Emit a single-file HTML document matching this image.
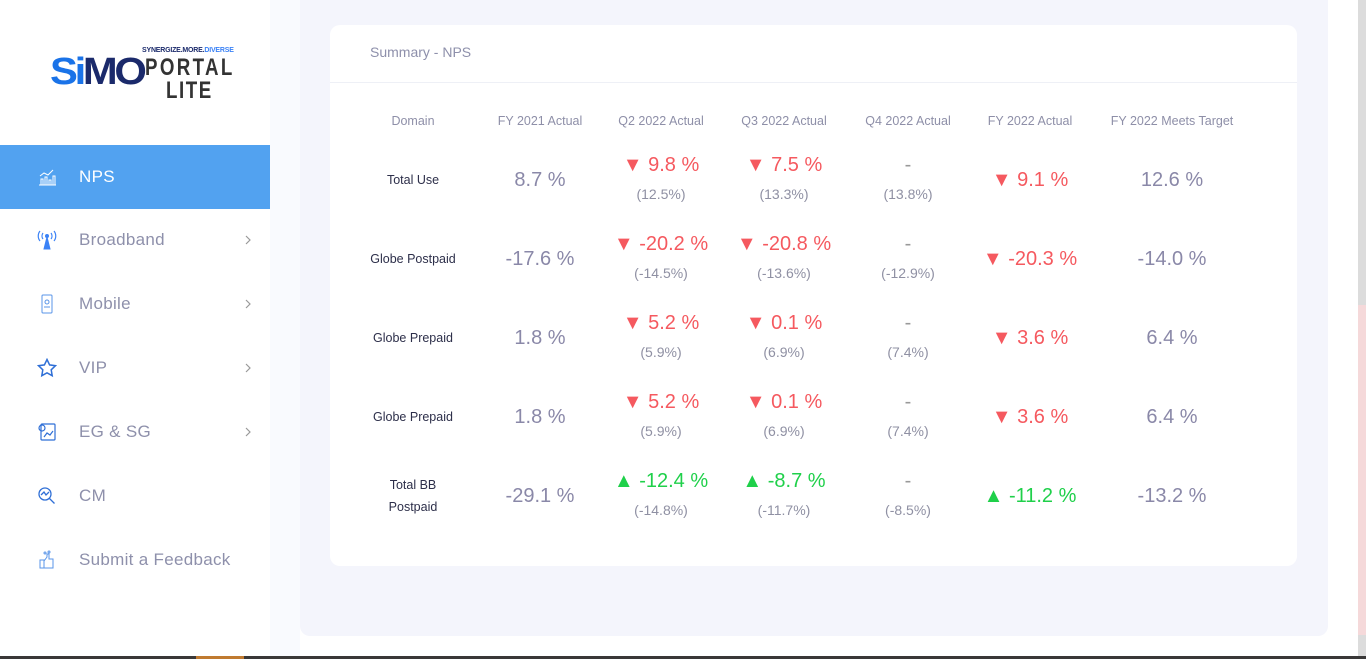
<!DOCTYPE html>
<html><head><meta charset="utf-8"><style>
*{margin:0;padding:0;box-sizing:border-box}
body{width:1366px;height:659px;overflow:hidden;background:#fff;font-family:"Liberation Sans",sans-serif;position:relative}
.abs{position:absolute}
.side{left:0;top:0;width:270px;height:659px;background:#fff}
.strip{left:270px;top:0;width:30px;height:659px;background:#f9fafe}
.main{left:300px;top:-10px;width:1028px;height:646px;background:#f4f5fc;border-radius:0 0 10px 10px}
.card{left:330px;top:25px;width:967px;height:541px;background:#fff;border-radius:10px}
.nav{left:0;width:270px;height:64px;color:#8e90ab;font-size:17px;letter-spacing:.3px}
.nav .t{position:absolute;left:79px;top:50%;transform:translateY(-50%)}
.nav .i{position:absolute;left:37px;top:50%;transform:translateY(-50%);width:20px;height:20px}
.nav .c{position:absolute;left:244px;top:50%;transform:translateY(-50%);width:8px;height:10px}
.c1{position:absolute;width:160px;text-align:center;transform:translateX(-80px)}
.h{top:114px;font-size:12.5px;color:#8e8fa8}
.d{font-size:12.5px;color:#2d2f4a;line-height:22px}
.big{font-size:20px;color:#8a88a8}
.r{color:#f5595f}.g{color:#1fd04a}
.sub{font-size:14px;color:#8f90a3;margin-top:9px}
</style></head><body>
<div class="abs side"></div>
<div class="abs strip"></div>
<div class="abs main"></div>
<div class="abs" style="left:1358px;top:0;width:8px;height:659px;background:#dcdcdc"></div>
<div class="abs" style="left:1358px;top:305px;width:8px;height:330px;background:#f5d9da"></div>
<div class="abs" style="left:0;top:656px;width:1366px;height:3px;background:#3a3838"></div>
<div class="abs" style="left:196px;top:656px;width:48px;height:3px;background:#c07a30"></div>

<!-- logo -->
<div class="abs" style="left:50px;top:52px;font:900 38px/40px 'Liberation Sans',sans-serif;color:#1a73e8;letter-spacing:-3px;transform:scaleX(1.1);transform-origin:left">S<span>i</span><span style="color:#1b2a6b">MO</span></div>
<div class="abs" style="left:142px;top:47px;font-size:7px;color:#1b2a6b;font-weight:bold;letter-spacing:-.2px">SYNERGIZE.MORE.<span style="color:#3b82f6">DIVERSE</span></div>
<div class="abs" style="left:145px;top:57px;font:bold 24px/22px 'Liberation Sans Narrow','Liberation Sans',sans-serif;color:#333;letter-spacing:3px;transform:scaleX(.78);transform-origin:left">PORTAL</div>
<div class="abs" style="left:166px;top:80px;font:bold 24px/22px 'Liberation Sans Narrow','Liberation Sans',sans-serif;color:#333;letter-spacing:2px;transform:scaleX(.78);transform-origin:left">LITE</div>

<div class="abs nav" style="top:145px;background:#52a2f0;color:#fff"><svg class="i" viewBox="0 0 20 20" fill="none" stroke="#fff" stroke-width="1"><path d="M2 18h17M4 18v-6h2v6M8 18v-8h2v8M12 18v-5h2v5M16 18v-9h2v9M3 9l4-3 4 2 5-5"/></svg><span class="t">NPS</span></div>
<div class="abs nav" style="top:208px"><svg class="i" viewBox="0 0 20 20" fill="#3b82f6" stroke="#3b82f6"><path d="M10 7l-3 12h6z"/><circle cx="10" cy="6" r="1.5"/><path d="M6 3a5 5 0 0 0 0 6M14 3a5 5 0 0 1 0 6M3 1a8 8 0 0 0 0 10M17 1a8 8 0 0 1 0 10" fill="none" stroke-width="1.2"/></svg><span class="t">Broadband</span><svg class="c" viewBox="0 0 8 10" fill="none" stroke="#999" stroke-width="1.2"><path d="M2 1l4 4-4 4"/></svg></div>
<div class="abs nav" style="top:272px"><svg class="i" viewBox="0 0 20 20" fill="none" stroke="#5a95e8" stroke-width="1"><rect x="5" y="1" width="10" height="18" rx="1"/><circle cx="10" cy="8" r="2"/><path d="M7 13h6"/></svg><span class="t">Mobile</span><svg class="c" viewBox="0 0 8 10" fill="none" stroke="#999" stroke-width="1.2"><path d="M2 1l4 4-4 4"/></svg></div>
<div class="abs nav" style="top:336px"><svg class="i" viewBox="0 0 20 20" fill="none" stroke="#2f6fd6" stroke-width="1.5"><path d="M10 1.5l2.6 5.4 5.9.8-4.3 4.1 1 5.9L10 14.9l-5.2 2.8 1-5.9L1.5 7.7l5.9-.8z"/></svg><span class="t">VIP</span><svg class="c" viewBox="0 0 8 10" fill="none" stroke="#999" stroke-width="1.2"><path d="M2 1l4 4-4 4"/></svg></div>
<div class="abs nav" style="top:400px"><svg class="i" viewBox="0 0 20 20" fill="none" stroke="#2f6fd6" stroke-width="1.2"><rect x="4" y="2" width="14" height="16" rx="1"/><circle cx="5" cy="6" r="3"/><path d="M7 15l3-4 3 2 3-4"/></svg><span class="t">EG &amp; SG</span><svg class="c" viewBox="0 0 8 10" fill="none" stroke="#999" stroke-width="1.2"><path d="M2 1l4 4-4 4"/></svg></div>
<div class="abs nav" style="top:464px"><svg class="i" viewBox="0 0 20 20" fill="none" stroke="#2f6fd6" stroke-width="1.3"><circle cx="8" cy="8" r="6"/><path d="M12.5 12.5l5 5M4 9l3-3 2 3 3-3"/></svg><span class="t">CM</span></div>
<div class="abs nav" style="top:528px"><svg class="i" viewBox="0 0 20 20" fill="none" stroke="#5a95e8" stroke-width="1"><path d="M3 10h4v8H3zM7 11l3-4v-3h2v5h4v9H7"/><circle cx="8" cy="3" r="1"/><circle cx="12" cy="2" r="1"/></svg><span class="t">Submit a Feedback</span></div>

<div class="abs card"></div>
<div class="abs" style="left:370px;top:44px;font-size:14px;color:#8e90ab">Summary - NPS</div>
<div class="abs" style="left:330px;top:82px;width:967px;height:1px;background:#eef0f6"></div>

<div class="c1 h" style="left:413px">Domain</div>
<div class="c1 h" style="left:540px">FY 2021 Actual</div>
<div class="c1 h" style="left:661px">Q2 2022 Actual</div>
<div class="c1 h" style="left:784px">Q3 2022 Actual</div>
<div class="c1 h" style="left:908px">Q4 2022 Actual</div>
<div class="c1 h" style="left:1030px">FY 2022 Actual</div>
<div class="c1 h" style="left:1172px">FY 2022 Meets Target</div>

<!-- row 1 -->
<div class="c1 d" style="left:413px;top:169px">Total Use</div>
<div class="c1 big" style="left:540px;top:169px">8.7 %</div>
<div class="c1" style="left:661px;top:154px"><div class="big r">▼ 9.8 %</div><div class="sub">(12.5%)</div></div>
<div class="c1" style="left:784px;top:154px"><div class="big r">▼ 7.5 %</div><div class="sub">(13.3%)</div></div>
<div class="c1" style="left:908px;top:154px"><div class="big" style="color:#999">-</div><div class="sub">(13.8%)</div></div>
<div class="c1 big r" style="left:1030px;top:169px">▼ 9.1 %</div>
<div class="c1 big" style="left:1172px;top:169px">12.6 %</div>
<!-- row 2 -->
<div class="c1 d" style="left:413px;top:248px">Globe Postpaid</div>
<div class="c1 big" style="left:540px;top:248px">-17.6 %</div>
<div class="c1" style="left:661px;top:233px"><div class="big r">▼ -20.2 %</div><div class="sub">(-14.5%)</div></div>
<div class="c1" style="left:784px;top:233px"><div class="big r">▼ -20.8 %</div><div class="sub">(-13.6%)</div></div>
<div class="c1" style="left:908px;top:233px"><div class="big" style="color:#999">-</div><div class="sub">(-12.9%)</div></div>
<div class="c1 big r" style="left:1030px;top:248px">▼ -20.3 %</div>
<div class="c1 big" style="left:1172px;top:248px">-14.0 %</div>
<!-- row 3 -->
<div class="c1 d" style="left:413px;top:327px">Globe Prepaid</div>
<div class="c1 big" style="left:540px;top:327px">1.8 %</div>
<div class="c1" style="left:661px;top:312px"><div class="big r">▼ 5.2 %</div><div class="sub">(5.9%)</div></div>
<div class="c1" style="left:784px;top:312px"><div class="big r">▼ 0.1 %</div><div class="sub">(6.9%)</div></div>
<div class="c1" style="left:908px;top:312px"><div class="big" style="color:#999">-</div><div class="sub">(7.4%)</div></div>
<div class="c1 big r" style="left:1030px;top:327px">▼ 3.6 %</div>
<div class="c1 big" style="left:1172px;top:327px">6.4 %</div>
<!-- row 4 -->
<div class="c1 d" style="left:413px;top:406px">Globe Prepaid</div>
<div class="c1 big" style="left:540px;top:406px">1.8 %</div>
<div class="c1" style="left:661px;top:391px"><div class="big r">▼ 5.2 %</div><div class="sub">(5.9%)</div></div>
<div class="c1" style="left:784px;top:391px"><div class="big r">▼ 0.1 %</div><div class="sub">(6.9%)</div></div>
<div class="c1" style="left:908px;top:391px"><div class="big" style="color:#999">-</div><div class="sub">(7.4%)</div></div>
<div class="c1 big r" style="left:1030px;top:406px">▼ 3.6 %</div>
<div class="c1 big" style="left:1172px;top:406px">6.4 %</div>
<!-- row 5 -->
<div class="c1 d" style="left:413px;top:474px">Total BB<br>Postpaid</div>
<div class="c1 big" style="left:540px;top:485px">-29.1 %</div>
<div class="c1" style="left:661px;top:470px"><div class="big g">▲ -12.4 %</div><div class="sub">(-14.8%)</div></div>
<div class="c1" style="left:784px;top:470px"><div class="big g">▲ -8.7 %</div><div class="sub">(-11.7%)</div></div>
<div class="c1" style="left:908px;top:470px"><div class="big" style="color:#999">-</div><div class="sub">(-8.5%)</div></div>
<div class="c1 big g" style="left:1030px;top:485px">▲ -11.2 %</div>
<div class="c1 big" style="left:1172px;top:485px">-13.2 %</div>
</body></html>
